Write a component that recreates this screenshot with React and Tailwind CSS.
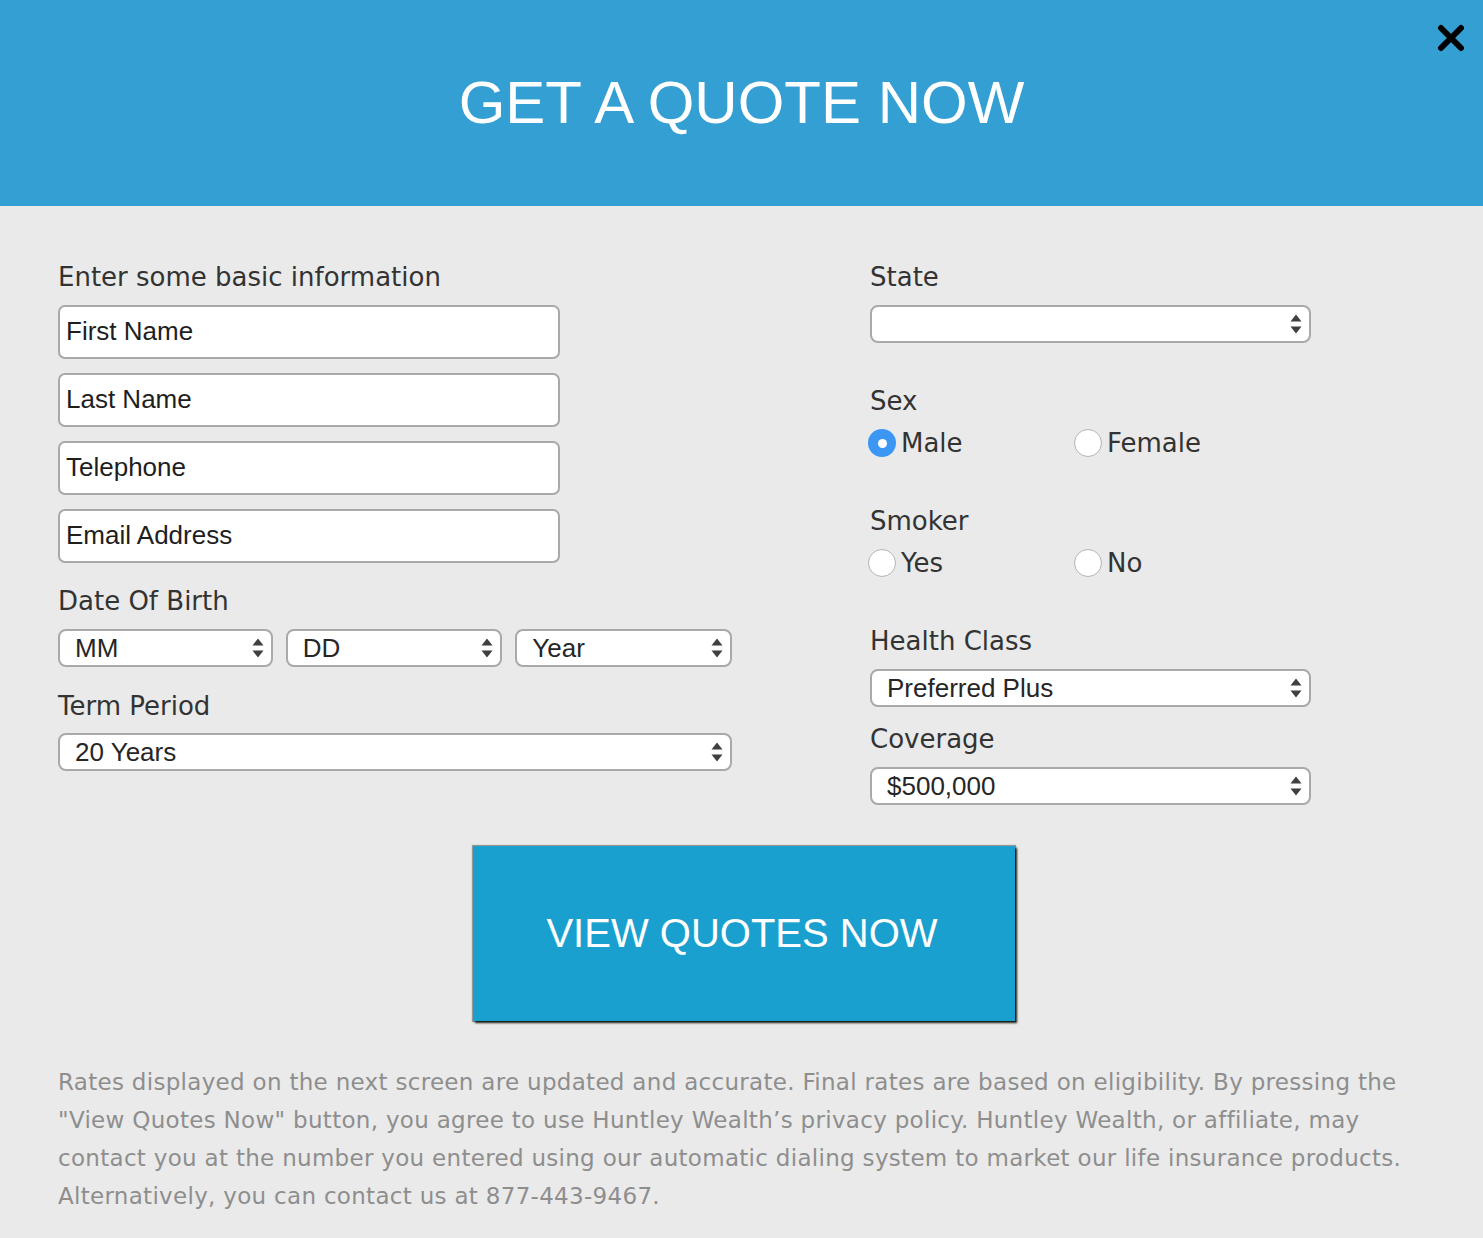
import React from "react";

const LABEL = { fontFamily: '"DejaVu Sans", sans-serif' };
const FIELD = { fontFamily: '"Liberation Sans", Arial, sans-serif' };

function Arrows() {
  return (
    <svg width="12" height="22" viewBox="0 0 12 22" className="shrink-0">
      <path d="M6 1.5 L11.5 8.5 L0.5 8.5 Z" fill="#3f3f3f" />
      <path d="M0.5 13.5 L11.5 13.5 L6 20.5 Z" fill="#3f3f3f" />
    </svg>
  );
}

function Select({ value, className = "" }) {
  return (
    <div
      className={`h-[38px] bg-white border-2 border-[#a9a9a9] rounded-[8px] flex items-center justify-between pl-[15px] pr-[7px] text-[26px] text-[#262626] ${className}`}
      style={FIELD}
    >
      <span className="leading-none -mt-[1px]">{value}</span>
      <Arrows />
    </div>
  );
}

function Input({ placeholder, className = "" }) {
  return (
    <div
      className={`h-[54px] w-[502px] bg-white border-2 border-[#a9a9a9] rounded-[7px] flex items-center pl-[6px] text-[26px] text-[#1e1e1e] ${className}`}
      style={FIELD}
    >
      <span className="-mt-[1px]">{placeholder}</span>
    </div>
  );
}

function Label({ children, className = "" }) {
  return (
    <div className={`h-[30px] leading-[30px] text-[26px] text-[#333] ${className}`} style={LABEL}>
      {children}
    </div>
  );
}

function Radio({ label, checked }) {
  return (
    <div className="w-[206px] flex items-center h-[30px]">
      {checked ? (
        <span className="w-[28px] h-[28px] rounded-full bg-[#3b97f3] flex items-center justify-center shrink-0">
          <span className="w-[9px] h-[9px] rounded-full bg-white" />
        </span>
      ) : (
        <span className="w-[28px] h-[28px] rounded-full bg-white border border-[#b4b4b4] shrink-0" />
      )}
      <span className="ml-[5px] text-[26px] text-[#333] leading-[30px]" style={LABEL}>
        {label}
      </span>
    </div>
  );
}

export default function App() {
  return (
    <div className="w-[1483px] h-[1238px] bg-[#eaeaea] overflow-hidden">
      <div className="relative h-[206px] bg-[#349fd3] flex items-center justify-center">
        <h1 className="text-white text-[60px] leading-none" style={FIELD}>
          GET A QUOTE NOW
        </h1>
        <svg
          className="absolute right-[18px] top-[24px]"
          width="28"
          height="28"
          viewBox="0 0 28 28"
        >
          <path d="M4 4 L24 24 M24 4 L4 24" stroke="#000" strokeWidth="6" strokeLinecap="round" />
        </svg>
      </div>

      <div className="flex pl-[58px] pt-[56px]">
        <div className="w-[812px] flex flex-col">
          <Label>Enter some basic information</Label>
          <Input placeholder="First Name" className="mt-[13px]" />
          <Input placeholder="Last Name" className="mt-[14px]" />
          <Input placeholder="Telephone" className="mt-[14px]" />
          <Input placeholder="Email Address" className="mt-[14px]" />
          <Label className="mt-[23px]">Date Of Birth</Label>
          <div className="flex gap-[13px] mt-[13px] w-[674px]">
            <Select value="MM" className="w-[215px]" />
            <Select value="DD" className="w-[217px]" />
            <Select value="Year" className="w-[217px]" />
          </div>
          <Label className="mt-[24px]">Term Period</Label>
          <Select value="20 Years" className="mt-[12px] w-[674px]" />
        </div>

        <div className="flex flex-col">
          <Label>State</Label>
          <Select value="" className="mt-[13px] w-[441px]" />
          <Label className="mt-[43px]">Sex</Label>
          <div className="flex mt-[12px] -ml-[2px]">
            <Radio label="Male" checked />
            <Radio label="Female" />
          </div>
          <Label className="mt-[48px]">Smoker</Label>
          <div className="flex mt-[12px] -ml-[2px]">
            <Radio label="Yes" />
            <Radio label="No" />
          </div>
          <Label className="mt-[48px]">Health Class</Label>
          <Select value="Preferred Plus" className="mt-[13px] w-[441px]" />
          <Label className="mt-[17px]">Coverage</Label>
          <Select value="$500,000" className="mt-[13px] w-[441px]" />
        </div>
      </div>

      <div className="flex justify-center mt-[41px] pl-[4px]">
        <button
          className="w-[542px] h-[175px] bg-[#1aa0ce] text-white text-[40px] flex items-center justify-center shadow-[0_0_1px_1px_rgba(0,0,0,0.35),2px_2px_2px_rgba(15,25,15,0.95)]"
          style={FIELD}
        >
          <span className="-mt-[2px] -ml-[3px]">VIEW QUOTES NOW</span>
        </button>
      </div>

      <div
        className="mt-[42px] pl-[58px] text-[23px] leading-[38px] tracking-[0.3px] text-[#8e8e8e]"
        style={LABEL}
      >
        <span className="block whitespace-nowrap">
          Rates displayed on the next screen are updated and accurate. Final rates are based on eligibility. By pressing the
        </span>
        <span className="block whitespace-nowrap">
          "View Quotes Now" button, you agree to use Huntley Wealth’s privacy policy. Huntley Wealth, or affiliate, may
        </span>
        <span className="block whitespace-nowrap">
          contact you at the number you entered using our automatic dialing system to market our life insurance products.
        </span>
        <span className="block whitespace-nowrap">Alternatively, you can contact us at 877-443-9467.</span>
      </div>
    </div>
  );
}
